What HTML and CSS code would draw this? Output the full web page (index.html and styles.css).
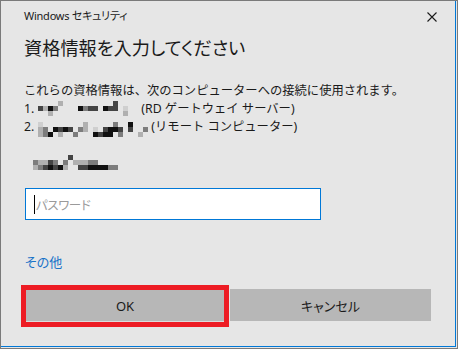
FILE: index.html
```html
<!DOCTYPE html>
<html lang="ja">
<head>
  <meta charset="UTF-8" />
  <title>Windows セキュリティ</title>
  <link rel="stylesheet" href="styles.css">
</head>
<body>
  <div class="window">
    <div class="frame">
      <div class="titlebar">
        <span class="app">Windows セキュリティ</span>
        <svg class="close" width="10" height="10" viewBox="0 0 10 10">
          <path d="M0.5 0.5 L9.5 9.5 M9.5 0.5 L0.5 9.5" stroke="#1a1a1a" stroke-width="1.1" fill="none"/>
        </svg>
      </div>

      <h1>資格情報を入力してください</h1>

      <div class="desc">
        <div class="line">これらの資格情報は、次のコンピューターへの接続に使用されます。</div>
        <div class="line">
          <span>1.</span>
          <span class="mosaic m-host">
            <i></i><i></i><i></i><i></i><i class="d"></i><i></i><i></i><i></i><i></i><i></i><i></i><i></i><i></i><i></i><i></i><i class="b"></i><i></i><i></i><i></i>
            <i class="b"></i><i class="d"></i><i class="a"></i><i class="c"></i><i></i><i></i><i></i><i></i><i class="a"></i><i class="c"></i><i class="b"></i><i class="b"></i><i></i><i class="a"></i><i class="b"></i><i class="b"></i><i></i><i class="e"></i><i></i>
            <i></i><i></i><i class="d"></i><i></i><i></i><i></i><i></i><i></i><i></i><i></i><i></i><i></i><i></i><i></i><i></i><i></i><i></i><i class="d"></i><i></i>
          </span>
          <span>(RD ゲートウェイ サーバー)</span>
        </div>
        <div class="line">
          <span>2.</span>
          <span class="mosaic m-pc">
            <i class="e"></i><i></i><i></i><i></i><i></i><i></i><i></i><i></i><i></i><i class="d"></i><i></i><i></i><i></i><i></i><i></i><i class="c"></i><i></i><i></i><i class="a"></i><i></i><i></i><i></i>
            <i class="d"></i><i class="c"></i><i></i><i class="a"></i><i class="b"></i><i class="a"></i><i class="b"></i><i></i><i class="c"></i><i class="d"></i><i></i><i class="e"></i><i></i><i class="b"></i><i class="a"></i><i class="a"></i><i class="b"></i><i></i><i class="b"></i><i></i><i></i><i class="c"></i>
            <i class="d"></i><i class="c"></i><i class="a"></i><i></i><i class="d"></i><i></i><i></i><i class="c"></i><i></i><i></i><i></i><i class="a"></i><i class="b"></i><i class="a"></i><i class="a"></i><i></i><i class="c"></i><i></i><i></i><i></i><i class="d"></i><i></i>
          </span>
          <span>(リモート コンピューター)</span>
        </div>
      </div>

      <div class="mosaic m-user">
        <i></i><i></i><i></i><i></i><i></i><i></i><i></i><i class="b"></i><i></i><i></i><i></i><i></i><i></i><i></i><i></i><i></i><i></i>
        <i class="c"></i><i class="d"></i><i class="d"></i><i class="b"></i><i class="c"></i><i></i><i class="c"></i><i></i><i class="d"></i><i class="d"></i><i class="d"></i><i class="c"></i><i class="c"></i><i></i><i></i><i></i><i></i>
        <i class="d"></i><i class="c"></i><i class="b"></i><i class="a"></i><i class="b"></i><i class="a"></i><i class="d"></i><i></i><i></i><i class="b"></i><i class="b"></i><i class="a"></i><i class="a"></i><i class="a"></i><i class="a"></i><i class="c"></i><i class="c"></i>
      </div>

      <div class="field">
        <span class="caret"></span>
        <span class="placeholder">パスワード</span>
      </div>

      <a class="more" href="#">その他</a>

      <div class="buttons">
        <button class="btn ok">OK</button>
        <button class="btn">キャンセル</button>
      </div>
    </div>
  </div>
</body>
</html>
```

FILE: styles.css
```css
body {
  margin: 0;
  background-color: #e6e6e6;
  font-family: "Noto Sans", "Noto Sans CJK JP", sans-serif;
  font-feature-settings: "palt";
  color: #1a1a1a;
}
.window {
  width: 458px;
  height: 349px;
  box-sizing: border-box;
  border: 1px solid #7a7a7a;
  padding-right: 1px;
  padding-bottom: 1px;
}
.frame {
  height: 100%;
  box-sizing: border-box;
  border-right: 1px solid #0078d7;
  border-bottom: 1px solid #0078d7;
  padding-left: 23px;
}
.titlebar {
  display: flex;
  justify-content: space-between;
  align-items: center;
  height: 30px;
  padding-right: 18px;
}
.titlebar .app {
  font-size: 11px;
  letter-spacing: -0.25px;
  margin-top: -2px;
}
.titlebar .close {
  margin-top: 1px;
}
h1 {
  margin: 3px 0 0;
  font-size: 18.2px;
  font-weight: normal;
  line-height: 28px;
}
.desc {
  margin-top: 19px;
  font-size: 12.3px;
  font-feature-settings: normal;
}
.desc .line {
  display: flex;
  align-items: center;
  height: 18px;
  white-space: nowrap;
}
.mosaic {
  display: grid;
  grid-auto-rows: 5px;
}
.mosaic i {
  display: block;
}
.mosaic i.a { background: #111; }
.mosaic i.b { background: #444; }
.mosaic i.c { background: #7d7d7d; }
.mosaic i.d { background: #b0b0b0; }
.mosaic i.e { background: #cfcfcf; }
.m-host {
  grid-template-columns: repeat(19, 5px);
  margin: 0 8px 0 4px;
}
.m-pc {
  grid-template-columns: repeat(22, 5px);
  margin: 6px 3px 0 4px;
}
.m-user {
  grid-template-columns: repeat(17, 5px);
  margin: 20px 0 0 9px;
}
.field {
  display: flex;
  align-items: center;
  width: 296px;
  height: 32px;
  box-sizing: border-box;
  margin: 18px 0 0 1px;
  border: 1px solid #0078d7;
  background: #fff;
  padding-left: 8px;
}
.caret {
  width: 1px;
  height: 19px;
  background: #000;
  margin-right: 1px;
}
.placeholder {
  font-size: 12.5px;
  letter-spacing: -0.4px;
  color: #9a9a9a;
}
.more {
  display: block;
  width: max-content;
  margin: 33px 0 0 1px;
  font-size: 13px;
  line-height: 18px;
  color: #1a73c8;
  text-decoration: none;
}
.buttons {
  display: flex;
  align-items: flex-start;
  gap: 6px;
  margin: 18px 0 0 2px;
}
.btn {
  height: 32px;
  border: none;
  background: #b7b7b7;
  font-family: inherit;
  font-feature-settings: "palt";
  font-size: 13px;
  color: #1a1a1a;
  padding: 0;
}
.btn.ok {
  width: 198px;
  margin-top: 1px;
  border-bottom: 1px solid #dcdcdc;
  outline: 5px solid #ed1c24;
}
.btn:not(.ok) {
  width: 201px;
}
```
